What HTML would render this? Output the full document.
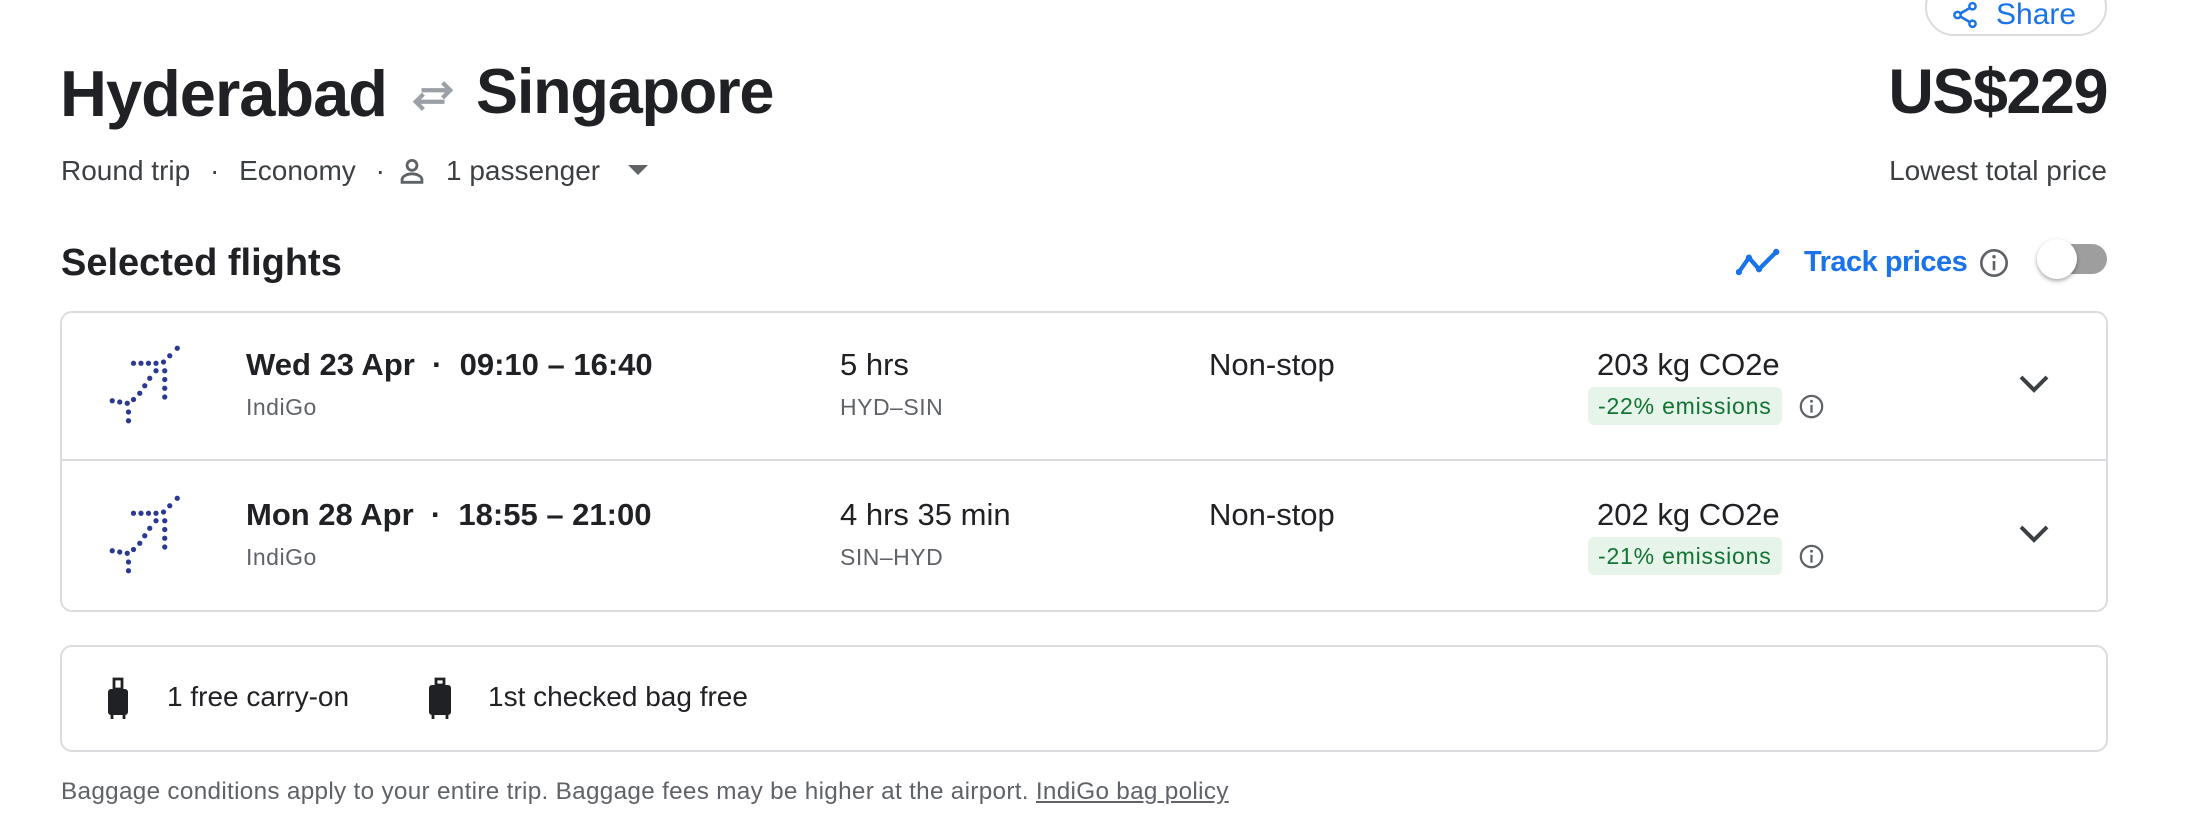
<!DOCTYPE html>
<html><head><meta charset="utf-8"><style>
*{margin:0;padding:0;box-sizing:border-box}
body{width:2200px;height:836px;background:#fff;font-family:"Liberation Sans",Arial,sans-serif;color:#202124;position:relative;overflow:hidden}
.a{position:absolute;white-space:nowrap}
.card{position:absolute;border:2px solid #dadce0;border-radius:12px}
.main{font-size:31px;font-weight:bold;color:#202124}
.reg{font-size:31px;color:#202124}
.sub{font-size:23px;color:#5f6368;letter-spacing:0.5px}
.badge{position:absolute;background:#e6f4ea;color:#137333;font-size:23px;border-radius:6px;padding:0 10px;height:38px;line-height:38px;letter-spacing:0.8px}
</style></head><body>

<div class="a" style="left:1925px;top:-22px;width:182px;height:58px;border:2px solid #dadce0;border-radius:30px"></div>
<svg class="a" style="left:1950px;top:0px" width="30" height="30" viewBox="0 0 24 24"><g fill="none" stroke="#1a73e8" stroke-width="2"><circle cx="18" cy="5" r="2.5"/><circle cx="6" cy="12" r="2.5"/><circle cx="18" cy="19" r="2.5"/><path d="M8.2 10.8l7.6-4.4M8.2 13.2l7.6 4.4"/></g></svg>
<div class="a" style="left:1996px;top:-2px;font-size:30px;color:#1a73e8">Share</div>

<div class="a" style="left:60px;top:56px;font-size:65px;font-weight:bold;letter-spacing:-1px">Hyderabad</div>
<svg class="a" style="left:410px;top:76px" width="46" height="40" viewBox="0 0 24 20"><g fill="none" stroke="#9aa0a6" stroke-width="2.2"><path d="M3 13h15M7 9l-4 4 4 4M21 7H6M17 3l4 4-4 4"/></g></svg>
<div class="a" style="left:476px;top:56px;font-size:63px;font-weight:bold;letter-spacing:-1.2px">Singapore</div>

<div class="a" style="left:61px;top:155px;font-size:28px;color:#3c4043">Round trip <span style="margin:0 12px">·</span> Economy <span style="margin:0 12px">·</span></div>
<svg class="a" style="left:395px;top:154px" width="34" height="34" viewBox="0 0 24 24"><g fill="none" stroke="#5f6368" stroke-width="2"><circle cx="12" cy="8" r="3.5"/><path d="M5 20v-2c0-2.5 4-4 7-4s7 1.5 7 4v2z"/></g></svg>
<div class="a" style="left:446px;top:155px;font-size:28px;color:#3c4043">1 passenger</div>
<svg class="a" style="left:628px;top:165px" width="20" height="12" viewBox="0 0 10 6"><path d="M0 0h10L5 5z" fill="#5f6368"/></svg>

<div class="a" style="left:1800px;top:56px;width:307px;text-align:right;font-size:63px;font-weight:bold;letter-spacing:-1.5px">US$229</div>
<div class="a" style="left:1700px;top:155px;width:407px;text-align:right;font-size:28px;color:#3c4043">Lowest total price</div>

<div class="a" style="left:61px;top:242px;font-size:38px;font-weight:bold">Selected flights</div>

<svg class="a" style="left:1736px;top:247px" width="46" height="30" viewBox="0 0 32 20"><path d="M2 17l7-10 7 8 12-12" fill="none" stroke="#1a73e8" stroke-width="3" stroke-linejoin="round"/><circle cx="2" cy="17" r="2.2" fill="#1a73e8"/><circle cx="9" cy="7" r="2.2" fill="#1a73e8"/><circle cx="16" cy="15" r="2.2" fill="#1a73e8"/><circle cx="28" cy="3" r="2.2" fill="#1a73e8"/></svg>
<div class="a" style="left:1804px;top:246px;font-size:29px;font-weight:bold;color:#1a73e8;letter-spacing:-0.5px">Track prices</div>
<svg class="a" style="left:1978px;top:247px" width="32" height="32" viewBox="0 0 24 24"><circle cx="12" cy="12" r="9.5" fill="none" stroke="#5f6368" stroke-width="2"/><path d="M12 10.5v7" stroke="#5f6368" stroke-width="2"/><circle cx="12" cy="7.3" r="1.3" fill="#5f6368"/></svg>
<div class="a" style="left:2047px;top:244px;width:60px;height:30px;border-radius:15px;background:#9e9e9e"></div>
<div class="a" style="left:2037px;top:239px;width:40px;height:40px;border-radius:50%;background:#fff;box-shadow:0 2px 4px rgba(0,0,0,.35)"></div>

<div class="card" style="left:60px;top:311px;width:2048px;height:301px"></div>
<div class="a" style="left:61px;top:459px;width:2046px;height:2px;background:#dadce0"></div>

<svg class="a" style="left:106px;top:342px" width="95" height="90" viewBox="0 0 76 72"><g fill="#2b3990"><circle cx="22" cy="17" r="2.1"/><circle cx="28" cy="17" r="2.1"/><circle cx="34" cy="17" r="2.1"/><circle cx="40" cy="17" r="2.1"/><circle cx="46" cy="16" r="2.1"/><circle cx="51" cy="11" r="2.1"/><circle cx="57" cy="5" r="2.1"/><circle cx="40" cy="23" r="2.1"/><circle cx="47" cy="23" r="2.1"/><circle cx="35" cy="29" r="2.1"/><circle cx="47" cy="30" r="2.1"/><circle cx="31" cy="35" r="2.1"/><circle cx="47" cy="37" r="2.1"/><circle cx="27" cy="41" r="2.1"/><circle cx="47" cy="44" r="2.1"/><circle cx="22" cy="46" r="2.1"/><circle cx="5" cy="47" r="2.1"/><circle cx="11" cy="48" r="2.1"/><circle cx="17" cy="49" r="2.1"/><circle cx="18" cy="56" r="2.1"/><circle cx="18" cy="63" r="2.1"/></g></svg>
<svg class="a" style="left:106px;top:492px" width="95" height="90" viewBox="0 0 76 72"><g fill="#2b3990"><circle cx="22" cy="17" r="2.1"/><circle cx="28" cy="17" r="2.1"/><circle cx="34" cy="17" r="2.1"/><circle cx="40" cy="17" r="2.1"/><circle cx="46" cy="16" r="2.1"/><circle cx="51" cy="11" r="2.1"/><circle cx="57" cy="5" r="2.1"/><circle cx="40" cy="23" r="2.1"/><circle cx="47" cy="23" r="2.1"/><circle cx="35" cy="29" r="2.1"/><circle cx="47" cy="30" r="2.1"/><circle cx="31" cy="35" r="2.1"/><circle cx="47" cy="37" r="2.1"/><circle cx="27" cy="41" r="2.1"/><circle cx="47" cy="44" r="2.1"/><circle cx="22" cy="46" r="2.1"/><circle cx="5" cy="47" r="2.1"/><circle cx="11" cy="48" r="2.1"/><circle cx="17" cy="49" r="2.1"/><circle cx="18" cy="56" r="2.1"/><circle cx="18" cy="63" r="2.1"/></g></svg>

<div class="a main" style="left:246px;top:347px">Wed 23 Apr &nbsp;·&nbsp; 09:10 – 16:40</div>
<div class="a sub" style="left:246px;top:394px">IndiGo</div>
<div class="a reg" style="left:840px;top:347px">5 hrs</div>
<div class="a sub" style="left:840px;top:394px">HYD–SIN</div>
<div class="a reg" style="left:1209px;top:347px">Non-stop</div>
<div class="a reg" style="left:1597px;top:347px">203 kg CO2e</div>
<div class="badge" style="left:1588px;top:387px">-22% emissions</div>
<svg class="a" style="left:1798px;top:393px" width="27" height="27" viewBox="0 0 24 24"><circle cx="12" cy="12" r="9.5" fill="none" stroke="#5f6368" stroke-width="2"/><path d="M12 10.5v7" stroke="#5f6368" stroke-width="2"/><circle cx="12" cy="7.3" r="1.3" fill="#5f6368"/></svg>
<svg class="a" style="left:2018px;top:373px" width="32" height="22" viewBox="0 0 16 11"><path d="M1.5 2l6.5 6.5L14.5 2" fill="none" stroke="#3c4043" stroke-width="2"/></svg>

<div class="a main" style="left:246px;top:497px">Mon 28 Apr &nbsp;·&nbsp; 18:55 – 21:00</div>
<div class="a sub" style="left:246px;top:544px">IndiGo</div>
<div class="a reg" style="left:840px;top:497px">4 hrs 35 min</div>
<div class="a sub" style="left:840px;top:544px">SIN–HYD</div>
<div class="a reg" style="left:1209px;top:497px">Non-stop</div>
<div class="a reg" style="left:1597px;top:497px">202 kg CO2e</div>
<div class="badge" style="left:1588px;top:537px">-21% emissions</div>
<svg class="a" style="left:1798px;top:543px" width="27" height="27" viewBox="0 0 24 24"><circle cx="12" cy="12" r="9.5" fill="none" stroke="#5f6368" stroke-width="2"/><path d="M12 10.5v7" stroke="#5f6368" stroke-width="2"/><circle cx="12" cy="7.3" r="1.3" fill="#5f6368"/></svg>
<svg class="a" style="left:2018px;top:523px" width="32" height="22" viewBox="0 0 16 11"><path d="M1.5 2l6.5 6.5L14.5 2" fill="none" stroke="#3c4043" stroke-width="2"/></svg>

<div class="card" style="left:60px;top:645px;width:2048px;height:107px"></div>
<svg class="a" style="left:104px;top:677px" width="28" height="42" viewBox="0 0 14 21"><path d="M5 1h4v5H5z" fill="none" stroke="#202124" stroke-width="1.4"/><rect x="2" y="6" width="10" height="13" rx="1.5" fill="#202124"/><path d="M4 19v2M10 19v2" stroke="#202124" stroke-width="1.4"/></svg>
<div class="a" style="left:167px;top:681px;font-size:28px">1 free carry-on</div>
<svg class="a" style="left:425px;top:677px" width="30" height="42" viewBox="0 0 15 21"><path d="M5.5 1h4v3h-4z" fill="none" stroke="#202124" stroke-width="1.4"/><rect x="2" y="4" width="11" height="15" rx="1.5" fill="#202124"/><path d="M4 19v2M11 19v2" stroke="#202124" stroke-width="1.4"/></svg>
<div class="a" style="left:488px;top:681px;font-size:28px">1st checked bag free</div>

<div class="a" style="left:61px;top:778px;font-size:24.3px;color:#5f6368;letter-spacing:0.3px">Baggage conditions apply to your entire trip. Baggage fees may be higher at the airport. <span style="text-decoration:underline">IndiGo bag policy</span></div>

</body></html>
